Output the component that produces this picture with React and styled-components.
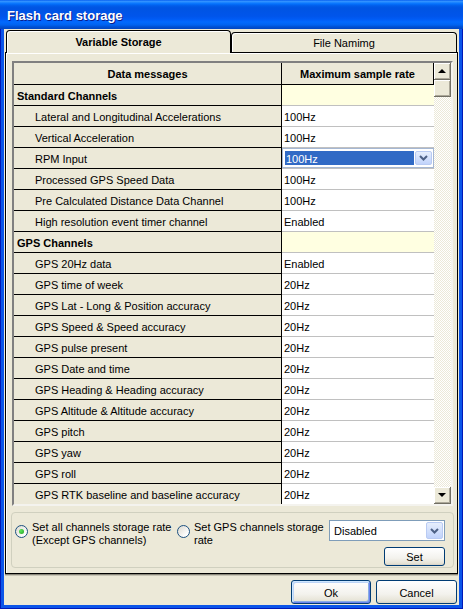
import styled, { createGlobalStyle } from "styled-components";

const GlobalStyle = createGlobalStyle`
  html, body { margin: 0; padding: 0; background: #fff; }
  body {
    font-family: "Liberation Sans", Arial, sans-serif;
    font-size: 11px;
    color: #000;
  }
  * { box-sizing: border-box; }
`;

const rows = [
  { label: "Standard Channels", group: true },
  { label: "Lateral and Longitudinal Accelerations", value: "100Hz" },
  { label: "Vertical Acceleration", value: "100Hz" },
  { label: "RPM Input", value: "100Hz", editing: true },
  { label: "Processed GPS Speed Data", value: "100Hz" },
  { label: "Pre Calculated Distance Data Channel", value: "100Hz" },
  { label: "High resolution event timer channel", value: "Enabled" },
  { label: "GPS Channels", group: true },
  { label: "GPS 20Hz data", value: "Enabled" },
  { label: "GPS time of week", value: "20Hz" },
  { label: "GPS Lat - Long & Position accuracy", value: "20Hz" },
  { label: "GPS Speed & Speed accuracy", value: "20Hz" },
  { label: "GPS pulse present", value: "20Hz" },
  { label: "GPS Date and time", value: "20Hz" },
  { label: "GPS Heading & Heading accuracy", value: "20Hz" },
  { label: "GPS Altitude & Altitude accuracy", value: "20Hz" },
  { label: "GPS pitch", value: "20Hz" },
  { label: "GPS yaw", value: "20Hz" },
  { label: "GPS roll", value: "20Hz" },
  { label: "GPS RTK baseline and baseline accuracy", value: "20Hz" },
];

const Window = styled.div`
  width: 463px;
  height: 609px;
  display: flex;
  flex-direction: column;
  background: #0b55e9;
  box-shadow: inset 1px 0 #0019b8, inset -1px 0 #0019b8, inset 0 -1px #0019b8;
`;

const TitleBar = styled.div`
  height: 29px;
  flex-shrink: 0;
  display: flex;
  align-items: center;
  padding: 1px 0 0 7px;
  color: #fff;
  font: bold 13px "Liberation Sans", Arial, sans-serif;
  text-shadow: 1px 1px #0a1e8c;
  background: linear-gradient(
    to bottom,
    #0058ee 0%,
    #3593ff 4%,
    #288eff 7%,
    #127dff 10%,
    #036ffc 14%,
    #0262ee 18%,
    #0057e5 24%,
    #0054e3 30%,
    #0055eb 56%,
    #005bf5 66%,
    #026afe 76%,
    #0062ef 86%,
    #0052d6 92%,
    #0045c0 100%
  );
`;

const Client = styled.div`
  flex: 1;
  display: flex;
  flex-direction: column;
  margin: 0 4px 4px;
  padding: 1px 1px 1px;
  background: #ece9d8;
`;

const TabRow = styled.div`
  height: 22px;
  display: flex;
  align-items: flex-end;
  padding-left: 1px;
`;

const Tab = styled.div`
  position: relative;
  z-index: ${(p) => (p.$active ? 2 : 1)};
  width: ${(p) => (p.$active ? 225 : 226)}px;
  height: ${(p) => (p.$active ? 23 : 20)}px;
  margin-bottom: ${(p) => (p.$active ? -1 : 0)}px;
  display: flex;
  align-items: center;
  justify-content: center;
  padding-bottom: ${(p) => (p.$active ? 1 : 0)}px;
  background: #ece9d8;
  border: 1px solid #000;
  border-bottom: none;
  border-radius: 4px 4px 0 0;
  box-shadow: inset 1px 1px #fff;
  font-weight: ${(p) => (p.$active ? "bold" : "normal")};
`;

const Panel = styled.div`
  width: 453px;
  height: 522px;
  display: flex;
  flex-direction: column;
  padding: 8px 0 5px;
  border: 1px solid #000;
  box-shadow: inset 1px 1px #fff, 0 1px #8a887c, 0 2px #c8c5b6;
`;

const Grid = styled.div`
  width: 441px;
  height: 445px;
  margin-left: 6px;
  display: flex;
  border: 2px solid;
  border-color: #808080 #f4f3ee #f4f3ee #808080;
  box-shadow: inset 1px 1px #404040;
  overflow: hidden;
`;

const Table = styled.div`
  width: 420px;
  display: flex;
  flex-direction: column;
`;

const Row = styled.div`
  display: flex;
  flex-shrink: 0;
  height: ${(p) => (p.$header ? 22 : 21)}px;
`;

const HeadCell = styled.div`
  width: ${(p) => p.$w}px;
  display: flex;
  align-items: center;
  justify-content: center;
  padding-top: 1px;
  font-weight: bold;
  background: #ece9d8;
  border-right: 1px solid #000;
  border-bottom: 1px solid #000;
`;

const LabelCell = styled.div`
  width: 268px;
  display: flex;
  align-items: center;
  padding: 1px 0 0 ${(p) => (p.$group ? 3 : 21)}px;
  font-weight: ${(p) => (p.$group ? "bold" : "normal")};
  white-space: nowrap;
  background: #ece9d8;
  border-right: 1px solid #000;
  border-bottom: 1px solid #000;
`;

const ValueCell = styled.div`
  flex: 1;
  display: flex;
  align-items: center;
  padding: 1px 0 0 2px;
  background: ${(p) => (p.$group ? "#ffffe1" : "#fff")};
  border-bottom: 1px solid #c0c0c0;
`;

const CellCombo = styled.div`
  flex: 1;
  align-self: stretch;
  display: flex;
  align-items: stretch;
  gap: 1px;
  margin: -1px 0 0 -2px;
  padding: 2px 1px 2px 2px;
  border: 1px solid #a5b7d3;
  background: #fff;
`;

const Highlight = styled.div`
  flex: 1;
  display: flex;
  align-items: center;
  padding: 1px 0 0 1px;
  background: #316ac5;
  color: #fff;
`;

const DropButton = styled.div`
  width: 17px;
  display: flex;
  align-items: center;
  justify-content: center;
  border: 1px solid #b9cbf3;
  border-radius: 2px;
  background: linear-gradient(#e6eefc, #c1d3fb);
`;

const Scrollbar = styled.div`
  width: 17px;
  display: flex;
  flex-direction: column;
  background: repeating-conic-gradient(#ece9d8 0% 25%, #fff 0% 50%) 0 0 / 2px 2px;
`;

const ScrollButton = styled.div`
  width: 17px;
  height: 17px;
  flex-shrink: 0;
  display: flex;
  align-items: center;
  justify-content: center;
  background: #ece9d8;
  border-right: 1px solid #716f64;
  border-bottom: 1px solid #716f64;
  box-shadow: inset 1px 1px #fff, inset -1px -1px #aca899;
`;

const Arrow = styled.span`
  width: 0;
  height: 0;
  border-left: 4px solid transparent;
  border-right: 4px solid transparent;
  ${(p) =>
    p.$down ? "border-top: 4px solid #000;" : "border-bottom: 4px solid #000;"}
`;

const Track = styled.div`
  flex: 1;
`;

const GroupBox = styled.div`
  width: 443px;
  height: 56px;
  margin: 6px 0 0 5px;
  display: flex;
  align-items: flex-start;
  padding: 7px 0 0 3px;
  border: 1px solid #d0d0bf;
  border-radius: 4px;
`;

const RadioLabel = styled.label`
  width: ${(p) => p.$w}px;
  display: flex;
  align-items: flex-start;
  gap: 4px;
  padding-top: 1px;
  line-height: 13px;
  white-space: nowrap;
`;

const Radio = styled.span`
  width: 13px;
  height: 13px;
  flex-shrink: 0;
  margin-top: 4px;
  display: flex;
  align-items: center;
  justify-content: center;
  border: 1px solid #1c5180;
  border-radius: 50%;
  background: linear-gradient(135deg, #dcd9cf, #fff 80%);
  &::after {
    content: "";
    width: 5px;
    height: 5px;
    border-radius: 50%;
    background: ${(p) =>
      p.$checked ? "radial-gradient(circle at 35% 35%, #5ee65e, #21a121)" : "transparent"};
  }
`;

const RightColumn = styled.div`
  width: 116px;
  display: flex;
  flex-direction: column;
  align-items: flex-end;
  gap: 6px;
`;

const Select = styled.div`
  width: 116px;
  height: 21px;
  display: flex;
  align-items: stretch;
  padding: 1px;
  border: 1px solid #7f9db9;
  background: #fff;
`;

const SelectText = styled.div`
  flex: 1;
  display: flex;
  align-items: center;
  padding: 1px 0 0 3px;
`;

const Button = styled.button`
  width: ${(p) => p.$w}px;
  height: ${(p) => p.$h}px;
  padding: 1px 0 0;
  font: 11px "Liberation Sans", Arial, sans-serif;
  color: #000;
  border: 1px solid #003c74;
  border-radius: 3px;
  background: linear-gradient(#fff 0%, #f3f2ed 60%, #e6e3d6 90%, #d6d0c5 100%);
  box-shadow: ${(p) =>
    p.$default
      ? "inset 1px 1px #cee7ff, inset -1px -1px #6982ee, inset 2px 2px #bcd4f6, inset -2px -2px #89ade4"
      : "none"};
`;

const Footer = styled.div`
  display: flex;
  justify-content: flex-end;
  gap: 5px;
  margin-top: 6px;
  padding-right: 1px;
`;

function Chevron() {
  return (
    <svg width="9" height="6" viewBox="0 0 9 6">
      <polyline points="1,1 4.5,4.5 8,1" fill="none" stroke="#4d6185" strokeWidth="2" />
    </svg>
  );
}

export default function App() {
  return (
    <>
      <GlobalStyle />
      <Window>
        <TitleBar>Flash card storage</TitleBar>
        <Client>
          <TabRow>
            <Tab $active>Variable Storage</Tab>
            <Tab>File Namimg</Tab>
          </TabRow>
          <Panel>
            <Grid>
              <Table>
                <Row $header>
                  <HeadCell $w={268}>Data messages</HeadCell>
                  <HeadCell $w={152}>Maximum sample rate</HeadCell>
                </Row>
                {rows.map((r) => (
                  <Row key={r.label}>
                    <LabelCell $group={r.group}>{r.label}</LabelCell>
                    <ValueCell $group={r.group}>
                      {r.editing ? (
                        <CellCombo>
                          <Highlight>{r.value}</Highlight>
                          <DropButton>
                            <Chevron />
                          </DropButton>
                        </CellCombo>
                      ) : (
                        r.value
                      )}
                    </ValueCell>
                  </Row>
                ))}
              </Table>
              <Scrollbar>
                <ScrollButton>
                  <Arrow />
                </ScrollButton>
                <ScrollButton />
                <Track />
                <ScrollButton>
                  <Arrow $down />
                </ScrollButton>
              </Scrollbar>
            </Grid>
            <GroupBox>
              <RadioLabel $w={162}>
                <Radio $checked />
                <span>
                  Set all channels storage rate
                  <br />
                  (Except GPS channels)
                </span>
              </RadioLabel>
              <RadioLabel $w={152}>
                <Radio />
                <span>
                  Set GPS channels storage
                  <br />
                  rate
                </span>
              </RadioLabel>
              <RightColumn>
                <Select>
                  <SelectText>Disabled</SelectText>
                  <DropButton>
                    <Chevron />
                  </DropButton>
                </Select>
                <Button $w={61} $h={19}>
                  Set
                </Button>
              </RightColumn>
            </GroupBox>
          </Panel>
          <Footer>
            <Button $w={80} $h={24} $default>
              Ok
            </Button>
            <Button $w={81} $h={24}>
              Cancel
            </Button>
          </Footer>
        </Client>
      </Window>
    </>
  );
}
